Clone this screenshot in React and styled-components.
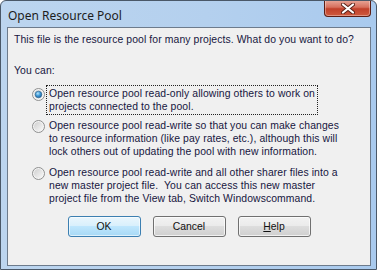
import React, { useState } from 'react';
import styled, { createGlobalStyle } from 'styled-components';

const GlobalStyle = createGlobalStyle`
  html, body {
    margin: 0;
    padding: 0;
    background: #ffffff;
  }
`;

const Window = styled.div`
  width: 377px;
  height: 270px;
  box-sizing: border-box;
  display: flex;
  flex-direction: column;
  border: 1px solid #4a5868;
  border-radius: 6px 6px 0 0;
  background: linear-gradient(90deg, #bcd5ef 0%, #b4d0ee 55%, #a9caee 100%);
  overflow: hidden;
`;

const TitleBar = styled.div`
  height: 26px;
  display: flex;
  align-items: flex-start;
  justify-content: space-between;
  padding-left: 7px;
`;

const Title = styled.span`
  margin-top: 6px;
  font-family: "Noto Sans", "Open Sans", sans-serif;
  font-size: 12px;
  color: #1d1d1d;
`;

const CloseButton = styled.div`
  width: 47px;
  height: 17px;
  margin-right: 5px;
  margin-top: -1px;
  box-sizing: border-box;
  border: 1px solid #5c1d14;
  border-top: none;
  border-radius: 0 0 4px 4px;
  background: linear-gradient(180deg, #e9a99b 0%, #d7705d 45%, #c1402a 55%, #cf5a3e 100%);
  box-shadow: inset 0 0 0 1px rgba(255, 255, 255, 0.35);
  display: flex;
  align-items: center;
  justify-content: center;
`;

const Client = styled.div`
  flex: 1;
  margin: 0 5px 3px 6px;
  border: 1px solid #6d7b8c;
  background: #f0f0f0;
  padding: 5px 6px 0 6px;
  display: flex;
  flex-direction: column;
  font-family: "Liberation Sans", Arial, sans-serif;
  font-size: 10.4px;
  letter-spacing: 0.1px;
  line-height: 13px;
  color: #161640;
  white-space: nowrap;
`;

const Text = styled.p`
  margin: ${({ top }) => top || 0}px 0 0 0;
`;

const Options = styled.div`
  display: flex;
  flex-direction: column;
  margin: 10px 0 0 18px;
`;

const Option = styled.label`
  display: flex;
  align-items: flex-start;
  gap: 2px;
  margin-top: ${({ space }) => space}px;
  cursor: default;
`;

const RadioBox = styled.span`
  flex: none;
  width: 13px;
  height: 13px;
  margin-top: 1px;
  display: flex;
`;

const OptionText = styled.span`
  padding: 0 1px;
  outline: ${({ focused }) => (focused ? '1px dotted #222' : 'none')};
  outline-offset: 0;
  border: 1px solid transparent;
  margin-top: -1px;
`;

const ButtonRow = styled.div`
  display: flex;
  justify-content: center;
  gap: 12px;
  margin-top: 10px;
`;

const Button = styled.button`
  width: 73px;
  height: 21px;
  box-sizing: border-box;
  padding: 0;
  border-radius: 3px;
  font-family: "Liberation Sans", Arial, sans-serif;
  font-size: 10.4px;
  color: #111;
  border: 1px solid ${({ primary }) => (primary ? '#3c7fb1' : '#707070')};
  background: ${({ primary }) =>
    primary
      ? 'linear-gradient(180deg, #eaf6fd 0%, #d9f0fc 45%, #bee6fd 50%, #a7d9f5 100%)'
      : 'linear-gradient(180deg, #f2f2f2 0%, #ebebeb 45%, #dddddd 50%, #cfcfcf 100%)'};
  box-shadow: inset 0 0 0 1px ${({ primary }) => (primary ? 'rgba(255,255,255,0.6)' : 'rgba(255,255,255,0.7)')};

  u {
    text-decoration: underline;
  }
`;

const Radio = ({ checked }) => (
  <svg width="13" height="13" viewBox="0 0 13 13">
    <defs>
      <linearGradient id="rfill" x1="0" y1="0" x2="1" y2="1">
        <stop offset="0" stopColor="#cfcfcf" />
        <stop offset="1" stopColor="#f8f8f8" />
      </linearGradient>
      <radialGradient id="rdot" cx="0.4" cy="0.35" r="0.7">
        <stop offset="0" stopColor="#b9e5fa" />
        <stop offset="0.5" stopColor="#3f9ad8" />
        <stop offset="1" stopColor="#1b5d95" />
      </radialGradient>
    </defs>
    <circle cx="6.5" cy="6.5" r="6" fill="#f4f4f4" stroke="#8e8f8f" strokeWidth="1" />
    <circle cx="6.5" cy="6.5" r="4.5" fill="url(#rfill)" />
    {checked && <circle cx="6.5" cy="6.5" r="3.3" fill="url(#rdot)" stroke="#2c5f8a" strokeWidth="0.6" />}
  </svg>
);

const options = [
  {
    id: 'ro',
    space: 0,
    lines: ['Open resource pool read-only allowing others to work on', 'projects connected to the pool.'],
  },
  {
    id: 'rw',
    space: 5,
    lines: [
      'Open resource pool read-write so that you can make changes',
      'to resource information (like pay rates, etc.), although this will',
      'lock others out of updating the pool with new information.',
    ],
  },
  {
    id: 'master',
    space: 7,
    lines: [
      'Open resource pool read-write and all other sharer files into a',
      'new master project file.  You can access this new master',
      'project file from the View tab, Switch Windowscommand.',
    ],
  },
];

export default function App() {
  const [choice, setChoice] = useState('ro');

  return (
    <>
      <GlobalStyle />
      <Window>
        <TitleBar>
          <Title>Open Resource Pool</Title>
          <CloseButton>
            <svg width="14" height="11" viewBox="0 0 14 11">
              <path d="M2 1.5 L12 9.5 M12 1.5 L2 9.5" stroke="#5a2218" strokeWidth="4" strokeLinecap="round" />
              <path d="M2 1.5 L12 9.5 M12 1.5 L2 9.5" stroke="#ffffff" strokeWidth="2.2" strokeLinecap="round" />
            </svg>
          </CloseButton>
        </TitleBar>
        <Client>
          <Text>This file is the resource pool for many projects. What do you want to do?</Text>
          <Text top={18}>You can:</Text>
          <Options>
            {options.map((o) => (
              <Option key={o.id} space={o.space} onClick={() => setChoice(o.id)}>
                <RadioBox>
                  <Radio checked={choice === o.id} />
                </RadioBox>
                <OptionText focused={choice === o.id}>
                  {o.lines.map((l, i) => (
                    <div key={i} style={{ whiteSpace: 'pre' }}>{l}</div>
                  ))}
                </OptionText>
              </Option>
            ))}
          </Options>
          <ButtonRow>
            <Button primary>OK</Button>
            <Button>Cancel</Button>
            <Button>
              <u>H</u>elp
            </Button>
          </ButtonRow>
        </Client>
      </Window>
    </>
  );
}
